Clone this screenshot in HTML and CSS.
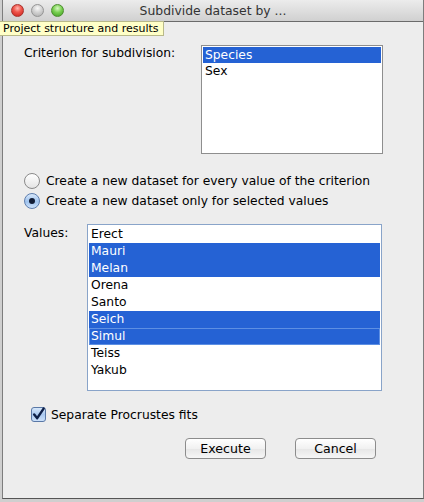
FILE: index.html
```html
<!DOCTYPE html>
<html>
<head>
<meta charset="utf-8">
<link rel="stylesheet" href="styles.css">
</head>
<body>
<div class="screen">
  <div class="window">
    <div class="titlebar">
      <div class="lights">
        <span class="light red"></span>
        <span class="light gray"></span>
        <span class="light green"></span>
      </div>
      <div class="title">Subdivide dataset by ...</div>
    </div>
    <div class="content">
      <div class="row criterion">
        <div class="label">Criterion for subdivision:</div>
        <div class="list crit-list">
          <div class="item sel">Species</div>
          <div class="item">Sex</div>
        </div>
      </div>
      <div class="radios">
        <div class="radio-row"><span class="radio"></span><span>Create a new dataset for every value of the criterion</span></div>
        <div class="radio-row"><span class="radio on"><span class="dot"></span></span><span>Create a new dataset only for selected values</span></div>
      </div>
      <div class="row values">
        <div class="label vlabel">Values:</div>
        <div class="list val-list">
          <div class="item">Erect</div>
          <div class="item sel">Mauri</div>
          <div class="item sel">Melan</div>
          <div class="item">Orena</div>
          <div class="item">Santo</div>
          <div class="item sel">Seich</div>
          <div class="item sel focus">Simul</div>
          <div class="item">Teiss</div>
          <div class="item">Yakub</div>
        </div>
      </div>
      <div class="check-row">
        <svg class="checkbox" width="15" height="15" viewBox="0 0 15 15">
          <defs>
            <linearGradient id="cb" x1="0" y1="0" x2="0" y2="1">
              <stop offset="0" stop-color="#d9e9fb"/>
              <stop offset="0.5" stop-color="#a9c8ef"/>
              <stop offset="1" stop-color="#cfe3fb"/>
            </linearGradient>
          </defs>
          <rect x="0.5" y="0.5" width="14" height="14" rx="2.5" fill="url(#cb)" stroke="#5a78a6"/>
          <path d="M3.2 7.4 L6.2 11.2 L12.6 1.6" fill="none" stroke="#0d1f47" stroke-width="2.4" stroke-linecap="round" stroke-linejoin="round"/>
        </svg>
        <span>Separate Procrustes fits</span>
      </div>
      <div class="buttons">
        <div class="btn">Execute</div>
        <div class="btn">Cancel</div>
      </div>
    </div>
  </div>
  <div class="tooltip">Project structure and results</div>
</div>
</body>
</html>
```
FILE: styles.css
```css
html, body {
  margin: 0;
  padding: 0;
}
body {
  font-family: "DejaVu Sans", sans-serif;
  font-size: 12.3px;
  color: #000;
}
.screen {
  position: relative;
  width: 424px;
  height: 502px;
  background: #cfcfcf;
  overflow: hidden;
}
.window {
  margin-left: 2px;
  width: 420px;
  height: 498px;
  background: #ededed;
  border-left: 1px solid #7d7d7d;
  border-right: 1px solid #7d7d7d;
  border-bottom: 1px solid #555;
  display: flex;
  flex-direction: column;
}
.titlebar {
  height: 21px;
  border-bottom: 1px solid #6b6b6b;
  background: linear-gradient(#ececec, #d0d0d0);
  display: flex;
  align-items: center;
  position: relative;
}
.lights {
  display: flex;
  gap: 7px;
  padding-left: 8px;
}
.light {
  width: 13px;
  height: 13px;
  border-radius: 50%;
  box-sizing: border-box;
}
.light.red {
  background: radial-gradient(circle at 50% 30%, #ffb8b0 0, #f0584e 40%, #c81d17 100%);
  border: 1px solid #a8322c;
}
.light.gray {
  background: radial-gradient(circle at 50% 30%, #f8f8f8 0, #d2d2d2 45%, #a9a9a9 100%);
  border: 1px solid #959595;
}
.light.green {
  background: radial-gradient(circle at 50% 30%, #d7f7c3 0, #79d051 45%, #3c9a20 100%);
  border: 1px solid #4d8d2f;
}
.title {
  position: absolute;
  left: 0;
  right: 0;
  top: 0;
  line-height: 21px;
  text-align: center;
  font-size: 12.4px;
  color: #333;
}
.content {
  padding: 23px 0 0 21px;
  display: flex;
  flex-direction: column;
}
.row {
  display: flex;
}
.label {
  white-space: nowrap;
}
.criterion .label {
  width: 177px;
  padding-top: 1px;
}
.list {
  background: #fff;
  box-sizing: border-box;
  padding: 1px;
}
.crit-list {
  width: 182px;
  height: 109px;
  border: 1px solid #8e8e8e;
}
.item {
  height: 16px;
  line-height: 16px;
  padding-left: 2px;
  white-space: nowrap;
}
.val-list .item {
  height: 17px;
  line-height: 17px;
}
.item.sel {
  background: #2562d4;
  color: #fff;
}
.item.focus {
  box-shadow: inset 0 0 0 1px #5d8fe3;
}
.radios {
  margin-top: 17px;
  display: flex;
  flex-direction: column;
}
.radio-row {
  height: 20px;
  display: flex;
  align-items: center;
  gap: 6px;
}
.radio {
  width: 16px;
  height: 16px;
  border-radius: 50%;
  box-sizing: border-box;
  border: 1px solid #8a8a8a;
  background: linear-gradient(#ffffff, #e4e4e4);
  display: flex;
  align-items: center;
  justify-content: center;
}
.radio.on {
  border-color: #5e7eae;
  background: linear-gradient(#d8e8fb, #9fc3ee 55%, #cde2fb);
}
.dot {
  width: 6px;
  height: 6px;
  border-radius: 50%;
  background: #111c35;
}
.values {
  margin-top: 13px;
}
.vlabel {
  width: 63px;
  padding-top: 2px;
}
.val-list {
  width: 295px;
  height: 167px;
  border: 1px solid #89a4c9;
}
.check-row {
  margin-top: 16px;
  padding-left: 7px;
  display: flex;
  align-items: center;
  gap: 5px;
  height: 15px;
}
.checkbox {
  display: block;
}
.buttons {
  margin-top: 16px;
  padding-left: 161px;
  display: flex;
  gap: 29px;
}
.btn {
  width: 81px;
  height: 21px;
  box-sizing: border-box;
  border: 1px solid #8c8c8c;
  border-radius: 4px;
  background: linear-gradient(#ffffff, #f1f1f1 50%, #e6e6e6 51%, #f6f6f6);
  text-align: center;
  line-height: 19px;
  font-size: 12.6px;
}
.tooltip {
  position: absolute;
  left: 0;
  top: 21px;
  height: 15px;
  box-sizing: border-box;
  padding: 0 4px 0 3px;
  background: #ffffc7;
  border: 1px solid #b9b98a;
  border-left: none;
  font-size: 11px;
  line-height: 13px;
  white-space: nowrap;
}
```
